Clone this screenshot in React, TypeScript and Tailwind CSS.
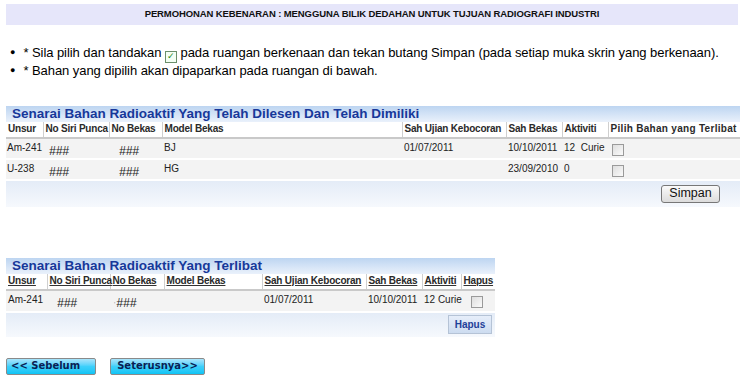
import React from 'react';

type Row = {
  unsur: string;
  siri: string;
  bekas: string;
  model: string;
  ujian: string;
  sah: string;
  aktiviti: string;
};

const dimiliki: Row[] = [
  { unsur: 'Am-241', siri: '###', bekas: '###', model: 'BJ', ujian: '01/07/2011', sah: '10/10/2011', aktiviti: '12\u00a0\u00a0Curie' },
  { unsur: 'U-238', siri: '###', bekas: '###', model: 'HG', ujian: '', sah: '23/09/2010', aktiviti: '0' },
];

const terlibat: Row[] = [
  { unsur: 'Am-241', siri: '###', bekas: '###', model: '', ujian: '01/07/2011', sah: '10/10/2011', aktiviti: '12 Curie' },
];

function Checkbox() {
  return (
    <span className="inline-block h-[12px] w-[12px] border border-[#9a9a9a] bg-gradient-to-br from-[#dedede] to-[#fafafa]" />
  );
}

function TitleBar({ children }: { children: React.ReactNode }) {
  return (
    <div className="flex h-[16px] items-center bg-gradient-to-b from-[#bdd5f1] to-[#eaf1fb] px-[6px] text-[13.5px] font-bold leading-none text-[#17389a]">
      {children}
    </div>
  );
}

function Th({
  w,
  children,
  underline,
  last,
  wide,
}: {
  w: number;
  children: React.ReactNode;
  underline?: boolean;
  last?: boolean;
  wide?: boolean;
}) {
  return (
    <th
      style={{ width: w }}
      className={`whitespace-nowrap border-b-2 border-[#c9c9c9] bg-white px-[2px] text-left text-[10px] leading-[14px] font-bold text-[#2a2a2a] ${
        wide ? 'tracking-[0.3px]' : 'tracking-[-0.2px]'
      } ${last ? '' : 'border-r border-r-[#cfcfcf]'}`}
    >
      <span className={underline ? 'underline decoration-[#333] underline-offset-[1px]' : ''}>{children}</span>
    </th>
  );
}

const td = 'whitespace-nowrap px-[2px] pt-[3px] align-top leading-[12px]';
const hash = 'whitespace-nowrap pt-[6px] align-top text-[12px] leading-[12px] italic';

export default function App() {
  return (
    <div className="h-[384px] w-[744px] overflow-hidden bg-white font-['Liberation_Sans',Arial,sans-serif]">
      {/* Page header */}
      <div className="mx-[6px] mt-[4px] flex h-[21px] items-center justify-center bg-[#e6e6fa] text-[9.5px] font-bold tracking-[-0.1px] text-[#111]">
        PERMOHONAN KEBENARAN : MENGGUNA BILIK DEDAHAN UNTUK TUJUAN RADIOGRAFI INDUSTRI
      </div>

      {/* Instructions */}
      <ul className="mt-[19px] ml-[10px] text-[13px] leading-[17px] tracking-[-0.06px] text-black">
        <li className="flex items-center gap-[8px]">
          <span className="text-[9px]">●</span>
          <span className="whitespace-nowrap">
            * Sila pilih dan tandakan{' '}
            <span className="relative top-[1px] inline-flex h-[12px] w-[12px] items-center justify-center border border-[#6b8f6b] bg-[#f4fff4] align-[-1px] text-[9px] leading-none text-[#1f8a1f]">
              ✓
            </span>{' '}
            pada ruangan berkenaan dan tekan butang Simpan (pada setiap muka skrin yang berkenaan).
          </span>
        </li>
        <li className="flex items-center gap-[8px]">
          <span className="text-[9px]">●</span>
          <span>* Bahan yang dipilih akan dipaparkan pada ruangan di bawah.</span>
        </li>
      </ul>

      {/* Table 1 */}
      <div className="mx-[6px] mt-[27px] w-[734px]">
        <TitleBar>Senarai Bahan Radioaktif Yang Telah Dilesen Dan Telah Dimiliki</TitleBar>
        <table className="w-full table-fixed border-collapse">
          <thead>
            <tr className="h-[16px]">
              <Th w={37}>Unsur</Th>
              <Th w={66}>No Siri Punca</Th>
              <Th w={53}>No Bekas</Th>
              <Th w={240}>Model Bekas</Th>
              <Th w={104}>Sah Ujian Kebocoran</Th>
              <Th w={56}>Sah Bekas</Th>
              <Th w={46}>Aktiviti</Th>
              <Th w={132} last wide>
                Pilih Bahan yang Terlibat
              </Th>
            </tr>
          </thead>
          <tbody className="text-[10px] text-[#222]">
            {dimiliki.map((r) => (
              <tr key={r.unsur} className="h-[21px] border-b-2 border-white bg-[#f3f3f3]">
                <td className={`${td} !px-[1px]`}>{r.unsur}</td>
                <td className={`${hash} pl-[6px]`}>{r.siri}</td>
                <td className={`${hash} pl-[10px]`}>{r.bekas}</td>
                <td className={td}>{r.model}</td>
                <td className={td}>{r.ujian}</td>
                <td className={td}>{r.sah}</td>
                <td className={td}>{r.aktiviti}</td>
                <td className="px-[4px] pt-[5px] align-top leading-none">
                  <Checkbox />
                </td>
              </tr>
            ))}
          </tbody>
        </table>
        <div className="flex h-[26px] items-start justify-end bg-gradient-to-b from-[#e4ecf7] to-[#f6f9fd] pt-[4px] pr-[20px]">
          <button className="h-[18px] w-[59px] rounded-[3px] border border-[#777] bg-gradient-to-b from-[#fafafa] to-[#dcdcdc] text-[12.5px] leading-none text-[#111]">
            Simpan
          </button>
        </div>
      </div>

      {/* Table 2 */}
      <div className="mx-[6px] mt-[51px] w-[489px]">
        <TitleBar>Senarai Bahan Radioaktif Yang Terlibat</TitleBar>
        <table className="w-full table-fixed border-collapse">
          <thead>
            <tr className="h-[16px]">
              <Th w={41} underline>Unsur</Th>
              <Th w={63} underline>No Siri Punca</Th>
              <Th w={54} underline>No Bekas</Th>
              <Th w={98} underline>Model Bekas</Th>
              <Th w={104} underline>Sah Ujian Kebocoran</Th>
              <Th w={56} underline>Sah Bekas</Th>
              <Th w={39} underline>Aktiviti</Th>
              <Th w={34} underline last>Hapus</Th>
            </tr>
          </thead>
          <tbody className="text-[10px] text-[#222]">
            {terlibat.map((r) => (
              <tr key={r.unsur} className="h-[21px] border-b-2 border-white bg-[#f3f3f3]">
                <td className={td}>{r.unsur}</td>
                <td className={`${hash} pl-[10px]`}>{r.siri}</td>
                <td className={`${hash} pl-[4px]`}>
                  <span className="mr-[1px] text-[7px] not-italic text-[#999]">'</span>
                  {r.bekas}
                </td>
                <td className={td}>{r.model}</td>
                <td className={td}>{r.ujian}</td>
                <td className={td}>{r.sah}</td>
                <td className={td}>{r.aktiviti}</td>
                <td className="px-[10px] pt-[5px] align-top leading-none">
                  <Checkbox />
                </td>
              </tr>
            ))}
          </tbody>
        </table>
        <div className="flex h-[24px] items-center justify-end bg-gradient-to-b from-[#e4ecf7] to-[#f6f9fd] pr-[3px]">
          <button className="h-[19px] w-[44px] border border-[#b5c3d6] bg-gradient-to-b from-[#e6eefa] to-[#cddcf0] text-[10px] font-bold leading-none text-[#1f3f99]">
            Hapus
          </button>
        </div>
      </div>

      {/* Navigation */}
      <div className="ml-[6px] mt-[21px] flex gap-[14px] font-['DejaVu_Sans',Verdana,sans-serif]">
        <button className="h-[17px] w-[90px] rounded-[2px] border border-[#8a8a8a] bg-gradient-to-b from-[#a8e4fb] via-[#3cd0fb] to-[#0ac4f5] pl-[4px] text-left text-[10px] font-bold leading-none text-[#0a1f55]">
          &lt;&lt; Sebelum
        </button>
        <button className="h-[17px] w-[95px] rounded-[2px] border border-[#8a8a8a] bg-gradient-to-b from-[#a8e4fb] via-[#3cd0fb] to-[#0ac4f5] text-[10px] font-bold leading-none text-[#0a1f55]">
          Seterusnya&gt;&gt;
        </button>
      </div>
    </div>
  );
}
